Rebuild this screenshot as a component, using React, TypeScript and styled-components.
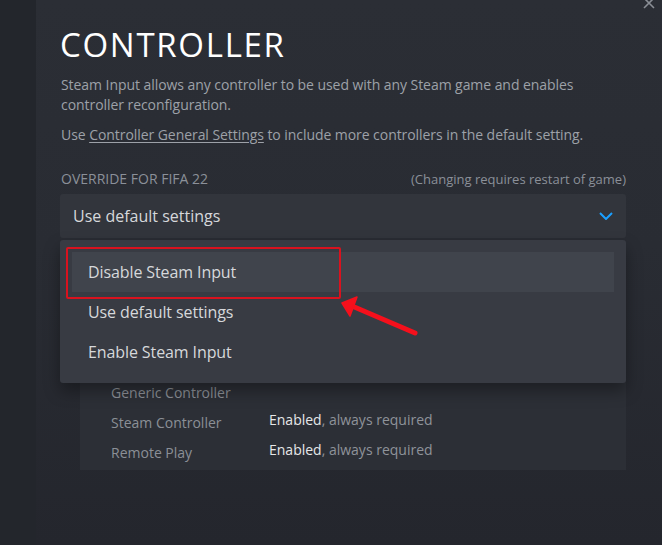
import { createGlobalStyle, styled } from "styled-components";

const GlobalStyle = createGlobalStyle`
  html, body {
    margin: 0;
    padding: 0;
    background: #24262d;
  }
  * {
    box-sizing: border-box;
  }
`;

const controllerRows = [
  { id: "generic", label: "Generic Controller", value: "", note: "" },
  { id: "steam", label: "Steam Controller", value: "Enabled", note: ", always required" },
  { id: "remote", label: "Remote Play", value: "Enabled", note: ", always required" },
];

const options = [
  { id: "disable", title: "Disable Steam Input", active: true },
  { id: "default", title: "Use default settings", active: false },
  { id: "enable", title: "Enable Steam Input", active: false },
];

export default function App(): JSX.Element {
  return (
    <>
      <GlobalStyle />
      <Page>
        <SideStrip />
        <Main>
          <CloseButton aria-label="Close">
            <svg width="12" height="12" viewBox="0 0 12 12">
              <path d="M1 1L11 11M11 1L1 11" stroke="#8a8e95" strokeWidth="1.6" />
            </svg>
          </CloseButton>
          <Title>CONTROLLER</Title>
          <Paragraph>
            Steam Input allows any controller to be used with any Steam game and enables
            controller reconfiguration.
          </Paragraph>
          <Paragraph $gap={10}>
            Use <LinkText>Controller General Settings</LinkText> to include more controllers in
            the default setting.
          </Paragraph>
          <FieldHeader>
            <FieldLabel>Override for FIFA 22</FieldLabel>
            <FieldHint>(Changing requires restart of game)</FieldHint>
          </FieldHeader>
          <SelectWrap>
            <Select>
              <span>Use default settings</span>
              <svg width="14" height="8" viewBox="0 0 14 8">
                <path d="M1 1L7 7L13 1" fill="none" stroke="#1a9fff" strokeWidth="2" />
              </svg>
            </Select>
            <Menu>
              {options.map((item) => (
                <MenuItem key={item.id} $active={item.active}>
                  {item.title}
                </MenuItem>
              ))}
              <Highlight />
              <Arrow width="82" height="44" viewBox="0 0 82 44">
                <path d="M14 12L77 39" stroke="#f5101c" strokeWidth="5" strokeLinecap="round" />
                <path d="M4 9L19 3L12 22Z" fill="#f5101c" stroke="#f5101c" strokeWidth="1.5" strokeLinejoin="round" />
              </Arrow>
            </Menu>
          </SelectWrap>
          <ControllerList>
            {controllerRows.map((row) => (
              <Row key={row.id}>
                <RowLabel>{row.label}</RowLabel>
                <RowValue>
                  <strong>{row.value}</strong>
                  {row.note}
                </RowValue>
              </Row>
            ))}
          </ControllerList>
        </Main>
      </Page>
    </>
  );
}

const Page = styled.div`
  display: flex;
  height: 545px;
  overflow: hidden;
  font-family: "Open Sans", "Noto Sans", Arial, sans-serif;
`;

const SideStrip = styled.div`
  width: 36px;
  flex-shrink: 0;
  background: #23262c;
`;

const Main = styled.div`
  position: relative;
  flex: 1;
  display: flex;
  flex-direction: column;
  padding: 25px 36px 0 24px;
  background: linear-gradient(180deg, #2b2e35 0%, #292c33 45%, #24262d 100%);
`;

const CloseButton = styled.div`
  position: absolute;
  top: -3px;
  right: 7px;
  display: flex;
`;

const Title = styled.h1`
  margin: 0;
  font-size: 33px;
  line-height: 40px;
  font-weight: 400;
  letter-spacing: 1.7px;
  color: #ffffff;
`;

const Paragraph = styled.p<{ $gap?: number }>`
  margin: ${(p) => p.$gap ?? 10}px 0 0 1px;
  font-size: 14px;
  line-height: 20px;
  letter-spacing: -0.06px;
  color: #9da1a8;
`;

const LinkText = styled.span`
  text-decoration: underline;
  text-underline-offset: 2px;
`;

const FieldHeader = styled.div`
  display: flex;
  justify-content: space-between;
  margin: 24px 0 0 1px;
  font-size: 14px;
  line-height: 20px;
  color: #8b9099;
`;

const FieldLabel = styled.span`
  text-transform: uppercase;
`;

const FieldHint = styled.span`
  font-size: 13px;
`;

const SelectWrap = styled.div`
  position: relative;
  margin-top: 5px;
`;

const Select = styled.div`
  display: flex;
  align-items: center;
  justify-content: space-between;
  height: 44px;
  padding: 0 13px 0 13px;
  background: #32353c;
  border-radius: 3px;
  font-size: 16px;
  color: #d6d8db;
`;

const Menu = styled.div`
  position: absolute;
  top: 46px;
  left: 0;
  right: 0;
  z-index: 2;
  display: flex;
  flex-direction: column;
  padding: 12px 12px 11px;
  background: #383b43;
  border-radius: 3px;
  box-shadow: 0 8px 16px rgba(0, 0, 0, 0.35);
`;

const MenuItem = styled.div<{ $active: boolean }>`
  display: flex;
  align-items: center;
  height: 40px;
  padding-left: 16px;
  font-size: 16px;
  letter-spacing: -0.1px;
  color: #d6d8db;
  background: ${(p) => (p.$active ? "#40444c" : "transparent")};
`;

const Highlight = styled.div`
  position: absolute;
  left: 6px;
  top: 7px;
  width: 275px;
  height: 52px;
  border: 2.5px solid #d9121e;
  border-radius: 2px;
`;

const Arrow = styled.svg`
  position: absolute;
  left: 278px;
  top: 54px;
`;

const ControllerList = styled.div`
  margin: 12px 0 0 20px;
  padding: 128px 0 2px 31px;
  background: #2c2f36;
`;

const Row = styled.div`
  display: grid;
  grid-template-columns: 158px 1fr;
  align-items: start;
  padding: 5px 0;
  height: 30px;
  font-size: 14px;
`;

const RowLabel = styled.span`
  line-height: 20px;
  color: #8b8f96;
`;

const RowValue = styled.span`
  line-height: 14px;
  color: #8f939a;

  strong {
    font-weight: 500;
    color: #e6e7e9;
  }
`;
